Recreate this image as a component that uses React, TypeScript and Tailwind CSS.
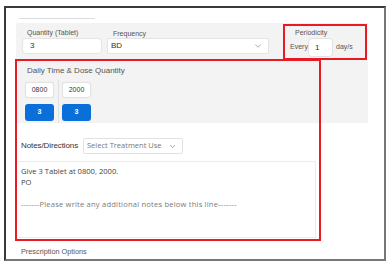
import { ChevronDown } from "lucide-react";

const arial = { fontFamily: '"Liberation Sans", Arial, sans-serif' };
const segoe = { fontFamily: '"Open Sans", "Noto Sans", sans-serif' };

function TimeSlot({ time, dose }: { time: string; dose: string }) {
  return (
    <div className="flex flex-col gap-[6px]">
      <div className="w-[29px] h-[16px] bg-white border border-[#e2e2e2] rounded-[3px] flex items-center justify-center text-[7px] text-[#333] shadow-[0_0_1px_rgba(0,0,0,0.08)]">
        {time}
      </div>
      <div className="w-[29px] h-[17px] bg-[#0a6fd8] rounded-[3px] flex items-center justify-center text-[7px] font-bold text-white">
        {dose}
      </div>
    </div>
  );
}

export default function App() {
  return (
    <div className="relative w-[389px] h-[263px] bg-white overflow-hidden" style={arial}>
      <div className="ml-[4px] mt-[6px] w-[382px] h-[255px] border-l-2 border-t-2 border-[#3a3a3a] border-r-2 border-r-[#777] border-b-2 border-b-[#777]">
        <div className="ml-[13px] mt-[10px] w-[76px] h-px bg-[#dcdcdc]" />

        {/* grey form panel */}
        <div className="ml-[10px] mt-[4px] w-[352px] h-[100px] bg-[#f3f3f3] pt-[5px]">
          <div className="flex">
            <div className="ml-[6px] w-[80px]">
              <div className="text-[7px] text-[#555] pl-[5px] h-[9px] leading-[9px]">Quantity (Tablet)</div>
              <div className="mt-[1px] h-[16px] bg-white border border-[#e4e4e4] rounded-[4px] flex items-center pl-[7px] text-[8px] text-[#333]">
                3
              </div>
            </div>
            <div className="ml-[5px] w-[162px]">
              <div className="text-[7px] text-[#555] pl-[6px] h-[9px] leading-[12px]">Frequency</div>
              <div className="mt-[1px] h-[16px] bg-white border border-[#e4e4e4] rounded-[2px] flex items-center justify-between pl-[3px] pr-[5px] text-[8px] text-[#333]">
                <span>BD</span>
                <ChevronDown size={10} strokeWidth={1.5} className="text-[#777]" />
              </div>
            </div>
            <div className="ml-[17px] flex flex-col">
              <div className="text-[7px] text-[#555] pl-[9px] h-[9px] leading-[9px]">Periodicity</div>
              <div className="mt-[1px] flex items-center text-[7px] text-[#555]">
                <span className="w-[22px] pl-[4px]">Every</span>
                <div className="w-[25px] h-[19px] bg-white border border-[#e2e2e2] rounded-[4px] flex items-center pl-[6px] text-[8px] text-[#333]">
                  1
                </div>
                <span className="ml-[3px]">day/s</span>
              </div>
            </div>
          </div>

          <div className="ml-[11px] mt-[9px] text-[8px] text-[#555] h-[10px] leading-[10px]">Daily Time &amp; Dose Quantity</div>
          <div className="ml-[9px] mt-[6px] flex">
            <TimeSlot time="0800" dose="3" />
            <div className="w-px h-[43px] -mt-[2px] bg-[#e0e0e0] mx-[3.5px]" />
            <TimeSlot time="2000" dose="3" />
          </div>
        </div>

        {/* notes */}
        <div className="ml-[15px] mt-[15px] flex items-center">
          <span className="w-[62px] text-[8px] text-[#333] tracking-[-0.1px]">Notes/Directions</span>
          <div
            className="w-[100px] h-[16px] border border-[#e2e2e2] rounded-[2px] flex items-center justify-between pl-[3px] pr-[5px] text-[7.5px] text-[#777]"
            style={segoe}
          >
            <span>Select Treatment Use</span>
            <ChevronDown size={9} strokeWidth={1.5} className="text-[#666]" />
          </div>
        </div>
        <div
          className="ml-[12px] mt-[7px] w-[298px] h-[77px] border border-[#ececec] border-l-0 pl-[3px] pt-[4px] text-[7.6px] leading-[11px]"
          style={segoe}
        >
          <div className="text-[#444]">Give 3 Tablet at 0800, 2000.</div>
          <div className="text-[#444]">PO</div>
          <div className="mt-[11px] text-[#7a7a7a] tracking-[0.19px]">-------Please write any additional notes below this line-------</div>
        </div>

        <div className="ml-[15px] mt-[9px] text-[7.3px] text-[#555]">Prescription Options</div>
      </div>

      {/* red annotation boxes */}
      <div className="absolute left-[283px] top-[24px] w-[84px] h-[36px] border-2 border-[#ea1a24]" />
      <div className="absolute left-[15px] top-[59px] w-[306px] h-[182px] border-2 border-[#ea1a24]" />
    </div>
  );
}
